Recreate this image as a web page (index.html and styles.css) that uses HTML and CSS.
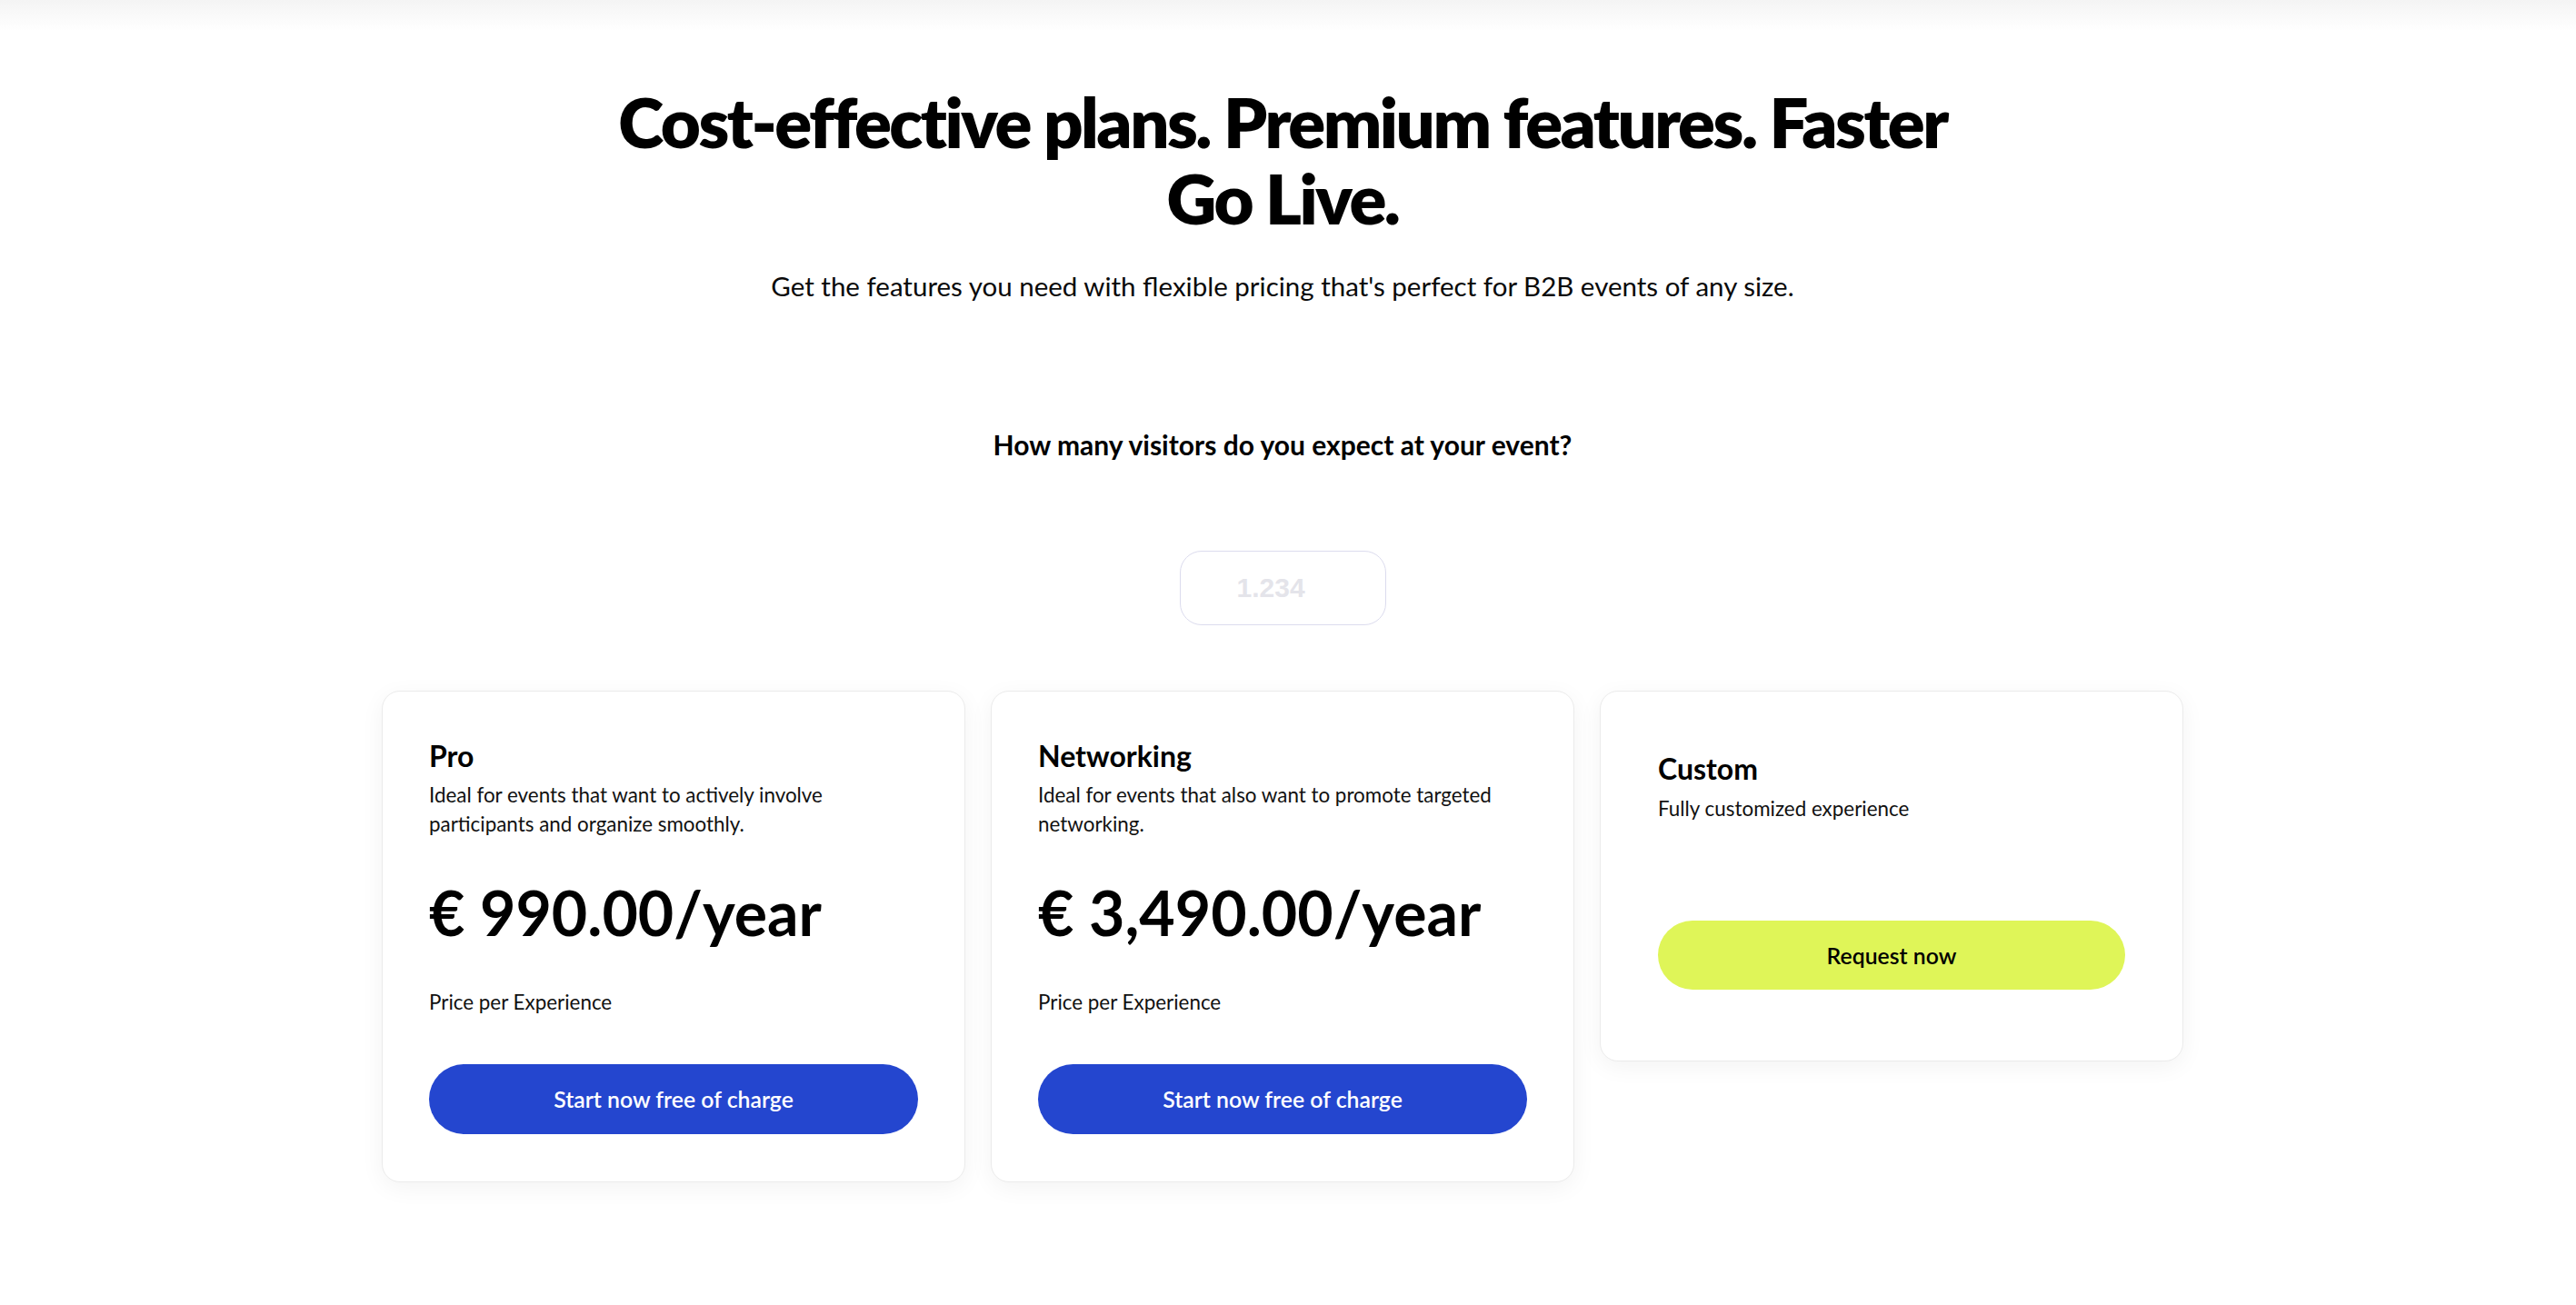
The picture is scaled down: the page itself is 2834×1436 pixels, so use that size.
FILE: index.html
```html
<!DOCTYPE html>
<html lang="en">
<head>
<meta charset="utf-8">
<title>Pricing</title>
<link rel="stylesheet" href="styles.css">
</head>
<body>
<div class="topbar"></div>
<main class="page">
  <section class="hero">
    <h1 class="hero-title">Cost-effective plans. Premium features. Faster<br>Go Live.</h1>
    <p class="hero-sub">Get the features you need with flexible pricing that's perfect for B2B events of any size.</p>
  </section>
  <section class="visitors">
    <h2 class="visitors-q">How many visitors do you expect at your event?</h2>
    <input class="visitors-input" type="text" placeholder="1.234">
  </section>
  <section class="plans">
    <article class="plan">
      <h3 class="plan-name">Pro</h3>
      <p class="plan-desc">Ideal for events that want to actively involve participants and organize smoothly.</p>
      <div class="plan-price">€ 990.00/year</div>
      <p class="plan-note">Price per Experience</p>
      <a class="btn btn-blue" href="#">Start now free of charge</a>
    </article>
    <article class="plan">
      <h3 class="plan-name">Networking</h3>
      <p class="plan-desc">Ideal for events that also want to promote targeted networking.</p>
      <div class="plan-price">€ 3,490.00/year</div>
      <p class="plan-note">Price per Experience</p>
      <a class="btn btn-blue" href="#">Start now free of charge</a>
    </article>
    <article class="plan plan-custom">
      <h3 class="plan-name">Custom</h3>
      <p class="plan-desc plan-desc-custom">Fully customized experience</p>
      <a class="btn btn-lime" href="#">Request now</a>
    </article>
  </section>
</main>
</body>
</html>
```
FILE: styles.css
```css
* { box-sizing: border-box; }

html, body {
  margin: 0;
  padding: 0;
  background: #ffffff;
}

body {
  font-family: Lato, "Noto Sans", sans-serif;
  color: #000000;
}

.topbar {
  height: 34px;
  background: linear-gradient(#f4f4f4, #ffffff);
}

.page {
  display: flex;
  flex-direction: column;
  align-items: center;
  padding: 0 12px 200px 0;
}

.hero {
  display: flex;
  flex-direction: column;
  align-items: center;
  text-align: center;
  padding-top: 58px;
}

.hero-title {
  margin: 0;
  font-size: 76px;
  line-height: 84px;
  font-weight: 800;
  letter-spacing: -0.033em;
}

.hero-sub {
  margin: 36px 0 0;
  font-size: 29.5px;
  line-height: 38px;
  font-weight: 400;
  color: #0a0a0a;
}

.visitors {
  display: flex;
  flex-direction: column;
  align-items: center;
  margin-top: 137px;
}

.visitors-q {
  margin: 0;
  font-size: 30px;
  line-height: 36px;
  font-weight: 700;
}

.visitors-input {
  margin-top: 99px;
  width: 227px;
  height: 82px;
  border: 1px solid #dcdcee;
  border-radius: 24px;
  padding: 0 0 0 62px;
  font-family: "Liberation Sans", Arial, sans-serif;
  font-size: 30px;
  font-weight: 700;
  color: #222;
  background: #fff;
  outline: none;
}

.visitors-input::placeholder {
  color: #e4e4ea;
}

.plans {
  margin-top: 72px;
  display: grid;
  grid-template-columns: repeat(3, 642px);
  column-gap: 28px;
  align-items: start;
}

.plan {
  display: flex;
  flex-direction: column;
  background: #ffffff;
  border: 1px solid #ebebeb;
  border-radius: 20px;
  box-shadow: 0 6px 26px rgba(0, 0, 0, 0.05);
  padding: 53px 51px 52px;
}

.plan-custom {
  padding: 67px 63px 78px;
}

.plan-name {
  margin: 0;
  font-size: 32px;
  line-height: 36px;
  font-weight: 700;
}

.plan-desc {
  margin: 9px 0 0;
  font-size: 22.4px;
  line-height: 32px;
  color: #111;
}

.plan-desc-custom {
  margin-top: 10px;
}

.plan-price {
  margin-top: 41px;
  font-size: 68px;
  line-height: 80px;
  font-weight: 700;
}

.plan-note {
  margin: 43px 0 0;
  font-size: 22.4px;
  line-height: 32px;
  color: #111;
}

.btn {
  display: flex;
  align-items: center;
  justify-content: center;
  height: 77px;
  border-radius: 40px;
  font-size: 24.8px;
  font-weight: 600;
  text-decoration: none;
}

.btn-blue {
  margin-top: 52px;
  background: #2446cf;
  color: #ffffff;
}

.btn-lime {
  margin-top: 107px;
  height: 76px;
  background: #dff558;
  color: #000000;
}
```
